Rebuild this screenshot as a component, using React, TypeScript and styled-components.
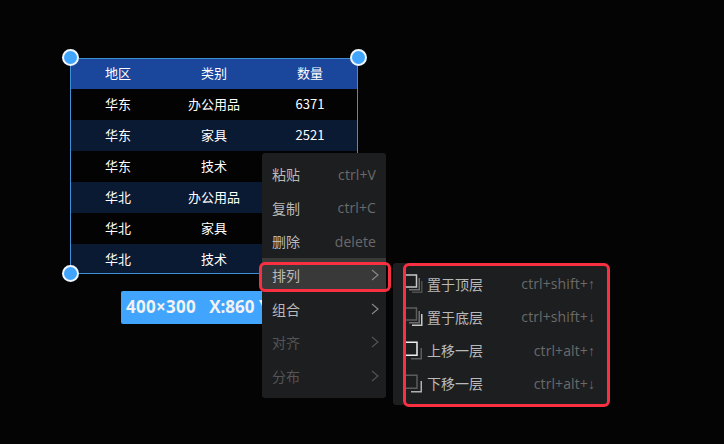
import styled, { createGlobalStyle } from "styled-components";

const GlobalStyle = createGlobalStyle`
  html, body {
    margin: 0;
    padding: 0;
    background: #040404;
  }
`;

// the last four amounts sit behind the context menu in the picture
const regions = [
  ["华东", "办公用品", "6371"],
  ["华东", "家具", "2521"],
  ["华东", "技术", ""],
  ["华北", "办公用品", ""],
  ["华北", "家具", ""],
  ["华北", "技术", ""],
];

// three stacked sheets: front square, then two L-shaped edges behind it
const TripleLayer = ({ front, mid, back }: { front: string; mid: string; back: string }) => (
  <IconSvg width="20" height="20" viewBox="0 0 20 20" fill="none" strokeWidth="1.5">
    <rect x="1" y="1" width="11.5" height="12" stroke={front} />
    <path d="M15.25 4v11.75H5" stroke={mid} />
    <path d="M17.75 7v11.25H8" stroke={back} />
  </IconSvg>
);

// two sheets: front square and one edge behind it
const DoubleLayer = ({ front, back }: { front: string; back: string }) => (
  <IconSvg width="20" height="20" viewBox="0 0 20 20" fill="none" strokeWidth="1.5">
    <rect x="1" y="2.25" width="12" height="13" stroke={front} />
    <path d="M17.25 8v10.75H7" stroke={back} />
  </IconSvg>
);

const Arrow = ({ color }: { color: string }) => (
  <ArrowSvg width="8" height="12" viewBox="0 0 8 12" fill="none" stroke={color} strokeWidth="1.1">
    <path d="M1 1l6 5-6 5" />
  </ArrowSvg>
);

const App = () => {
  return (
    <Canvas>
      <GlobalStyle />
      <TableBox>
        <HeaderRow>
          <Cell>地区</Cell>
          <Cell>类别</Cell>
          <Cell>数量</Cell>
        </HeaderRow>
        {regions.map((row, i) => (
          <Row key={i} $odd={i % 2 === 1}>
            {row.map((c, j) => (
              <Cell key={j}>{c}</Cell>
            ))}
          </Row>
        ))}
        <Handle $x="left" $y="top" $dx={-8} $dy={-9} />
        <Handle $x="right" $y="top" $dx={-9} $dy={-9} />
        <Handle $x="left" $y="bottom" $dx={-8} $dy={-8} />
      </TableBox>

      <SizeLabel>
        <SizeText>400×300</SizeText>
        <span>X:860 Y</span>
      </SizeLabel>

      <Menu>
        <MenuItem>
          <ItemName>粘贴</ItemName>
          <Shortcut>ctrl+V</Shortcut>
        </MenuItem>
        <MenuItem>
          <ItemName>复制</ItemName>
          <Shortcut>ctrl+C</Shortcut>
        </MenuItem>
        <MenuItem>
          <ItemName>删除</ItemName>
          <Shortcut>delete</Shortcut>
        </MenuItem>
        <MenuItem $active>
          <ItemName>排列</ItemName>
          <Arrow color="#8a8a8a" />
        </MenuItem>
        <MenuItem>
          <ItemName>组合</ItemName>
          <Arrow color="#8a8a8a" />
        </MenuItem>
        <MenuItem>
          <ItemName $disabled>对齐</ItemName>
          <Arrow color="#555" />
        </MenuItem>
        <MenuItem>
          <ItemName $disabled>分布</ItemName>
          <Arrow color="#555" />
        </MenuItem>
      </Menu>

      <SubMenu>
        <SubItem>
          <TripleLayer front="#c8c8c8" mid="#6e6e6e" back="#4e4e4e" />
          <ItemName>置于顶层</ItemName>
          <Shortcut>ctrl+shift+↑</Shortcut>
        </SubItem>
        <SubItem>
          <TripleLayer front="#5c5c5c" mid="#6e6e6e" back="#c8c8c8" />
          <ItemName>置于底层</ItemName>
          <Shortcut>ctrl+shift+↓</Shortcut>
        </SubItem>
        <SubItem>
          <DoubleLayer front="#f0f0f0" back="#5c5c5c" />
          <ItemName>上移一层</ItemName>
          <Shortcut>ctrl+alt+↑</Shortcut>
        </SubItem>
        <SubItem>
          <DoubleLayer front="#5c5c5c" back="#b0b0b0" />
          <ItemName>下移一层</ItemName>
          <Shortcut>ctrl+alt+↓</Shortcut>
        </SubItem>
      </SubMenu>

      <RedMark $left={259} $top={262} $width={132} $height={30} />
      <RedMark $left={403} $top={263} $width={207} $height={144} />
    </Canvas>
  );
};

export default App;

const Canvas = styled.div`
  position: relative;
  width: 724px;
  height: 444px;
  overflow: hidden;
  background: #040404;
  font-family: "Noto Sans CJK SC", "Noto Sans", sans-serif;
`;

const TableBox = styled.div`
  position: absolute;
  left: 70px;
  top: 58px;
  width: 288px;
  height: 216px;
  outline: 1px solid #3f8fd6;
  outline-offset: -1px;
  display: grid;
  grid-template-rows: repeat(6, 31px) 30px;
`;

const HeaderRow = styled.div`
  display: grid;
  grid-template-columns: repeat(3, 1fr);
  align-items: center;
  background: #1a469c;
`;

const Row = styled.div<{ $odd: boolean }>`
  display: grid;
  grid-template-columns: repeat(3, 1fr);
  align-items: center;
  background: ${(p) => (p.$odd ? "#0b1a33" : "#030303")};
`;

const Cell = styled.div`
  text-align: center;
  font-size: 13px;
  color: #ffffff;
  padding-bottom: 2px;
`;

const Handle = styled.div<{ $x: "left" | "right"; $y: "top" | "bottom"; $dx: number; $dy: number }>`
  position: absolute;
  ${(p) => p.$x}: ${(p) => p.$dx}px;
  ${(p) => p.$y}: ${(p) => p.$dy}px;
  width: 17px;
  height: 17px;
  box-sizing: border-box;
  border-radius: 50%;
  border: 2px solid #eef6ff;
  background: #41a5fd;
`;

const SizeLabel = styled.div`
  position: absolute;
  left: 121px;
  top: 291px;
  width: 141px;
  height: 33px;
  box-sizing: border-box;
  padding-left: 5px;
  border-radius: 2px 0 0 2px;
  background: #41a5fd;
  color: #f2f2f2;
  font-family: "Open Sans", sans-serif;
  font-size: 17px;
  font-weight: 700;
  line-height: 32px;
  white-space: nowrap;
  overflow: hidden;
  display: flex;
  gap: 13px;
`;

const SizeText = styled.span`
  letter-spacing: 0.3px;
`;

const Menu = styled.div`
  position: absolute;
  left: 262px;
  top: 153px;
  width: 124px;
  height: 245px;
  box-sizing: border-box;
  padding: 4.5px 0 5.5px;
  border-radius: 3px;
  background: #1d1e20;
  display: flex;
  flex-direction: column;
`;

const MenuItem = styled.div<{ $active?: boolean }>`
  flex: 1;
  display: flex;
  align-items: center;
  justify-content: space-between;
  padding: 0 10px;
  background: ${(p) => (p.$active ? "#39393a" : "transparent")};
`;

const ItemName = styled.span<{ $disabled?: boolean }>`
  font-size: 14px;
  color: ${(p) => (p.$disabled ? "#555" : "#b9b9b9")};
`;

const Shortcut = styled.span`
  margin-left: auto;
  font-family: "Open Sans", sans-serif;
  font-size: 14px;
  letter-spacing: 0.1px;
  color: #6a6a6a;
`;

const ArrowSvg = styled.svg`
  flex: none;
  margin-right: -3px;
`;

const SubMenu = styled.div`
  position: absolute;
  left: 393px;
  top: 263px;
  width: 214px;
  height: 142px;
  box-sizing: border-box;
  padding: 4px 12px 5px 11px;
  border-radius: 3px;
  background: #1d1e20;
  display: flex;
  flex-direction: column;
`;

const SubItem = styled.div`
  flex: 1;
  display: flex;
  align-items: center;
  gap: 3px;
`;

const IconSvg = styled.svg`
  flex: none;
`;

const RedMark = styled.div<{ $left: number; $top: number; $width: number; $height: number }>`
  position: absolute;
  left: ${(p) => p.$left}px;
  top: ${(p) => p.$top}px;
  width: ${(p) => p.$width}px;
  height: ${(p) => p.$height}px;
  box-sizing: border-box;
  border: 3px solid #f92f42;
  border-radius: 6px;
  pointer-events: none;
`;
